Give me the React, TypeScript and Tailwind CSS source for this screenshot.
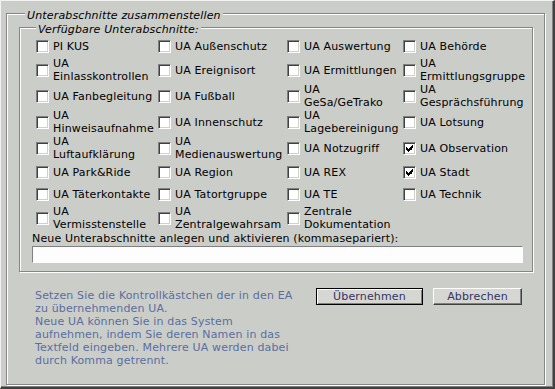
import type { ReactNode } from 'react'

type Item = { lines: string[]; checked?: boolean }

const rows: (Item | null)[][] = [
  [{ lines: ['PI KUS'] }, { lines: ['UA Außenschutz'] }, { lines: ['UA Auswertung'] }, { lines: ['UA Behörde'] }],
  [
    { lines: ['UA', 'Einlasskontrollen'] },
    { lines: ['UA Ereignisort'] },
    { lines: ['UA Ermittlungen'] },
    { lines: ['UA', 'Ermittlungsgruppe'] },
  ],
  [
    { lines: ['UA Fanbegleitung'] },
    { lines: ['UA Fußball'] },
    { lines: ['UA', 'GeSa/GeTrako'] },
    { lines: ['UA', 'Gesprächsführung'] },
  ],
  [
    { lines: ['UA', 'Hinweisaufnahme'] },
    { lines: ['UA Innenschutz'] },
    { lines: ['UA', 'Lagebereinigung'] },
    { lines: ['UA Lotsung'] },
  ],
  [
    { lines: ['UA', 'Luftaufklärung'] },
    { lines: ['UA', 'Medienauswertung'] },
    { lines: ['UA Notzugriff'] },
    { lines: ['UA Observation'], checked: true },
  ],
  [{ lines: ['UA Park&Ride'] }, { lines: ['UA Region'] }, { lines: ['UA REX'] }, { lines: ['UA Stadt'], checked: true }],
  [{ lines: ['UA Täterkontakte'] }, { lines: ['UA Tatortgruppe'] }, { lines: ['UA TE'] }, { lines: ['UA Technik'] }],
  [
    { lines: ['UA', 'Vermisstenstelle'] },
    { lines: ['UA', 'Zentralgewahrsam'] },
    { lines: ['Zentrale', 'Dokumentation'] },
    null,
  ],
]

function CheckBox({ checked }: { checked?: boolean }) {
  return (
    <span className="relative ml-[4px] inline-block h-[13px] w-[13px] shrink-0 border border-t-[#808080] border-l-[#808080] border-b-white border-r-white bg-white shadow-[inset_1px_1px_0_#404040,inset_-1px_-1px_0_#d4d0c8]">
      {checked ? (
        <svg
          className="absolute left-[2px] top-[2px]"
          width="7"
          height="7"
          viewBox="0 0 7 7"
          shapeRendering="crispEdges"
        >
          <path
            fill="#000"
            d="M6 0h1v3H6zM5 1h1v4H5zM4 2h1v3H4zM0 2h1v3H0zM1 3h1v3H1zM2 4h1v3H2zM3 3h1v3H3z"
          />
        </svg>
      ) : null}
    </span>
  )
}

function GroupBox({
  title,
  legendLeft,
  className,
  children,
}: {
  title: string
  legendLeft: string
  className: string
  children: ReactNode
}) {
  return (
    <div
      className={`relative border border-[#868686] shadow-[inset_1px_1px_0_#fff,1px_1px_0_#fff] ${className}`}
    >
      <span
        className={`absolute -top-[5px] ${legendLeft} bg-[#cbcdc9] px-[2px] italic leading-[13px] text-black`}
      >
        {title}
      </span>
      {children}
    </div>
  )
}

export default function App() {
  return (
    <div className="flex h-[389px] w-[555px] flex-col border-t border-l border-r-2 border-b-2 border-t-[#f2f2f0] border-l-[#f2f2f0] border-r-[#404040] border-b-[#404040] bg-[#cbcdc9] pt-[12px] pl-[5px] pr-[8px] pb-[2px] font-['DejaVu_Sans',Verdana,sans-serif] text-[11px] tracking-[0.15px] shadow-[inset_-1px_-1px_0_#808080]">
      <GroupBox title="Unterabschnitte zusammenstellen" legendLeft="left-[18px]" className="flex-1">
        <GroupBox
          title="Verfügbare Unterabschnitte:"
          legendLeft="left-[16px]"
          className="ml-[12px] mt-[13px] w-[514px] pl-[12px] pr-[9px] pt-[7px] pb-[8px]"
        >
          <div className="grid grid-cols-[122px_129px_116px_1fr] text-black">
            {rows.flatMap((row, r) =>
              row.map((item, c) =>
                item ? (
                  <label key={`${r}-${c}`} className="flex min-h-[22px] items-center">
                    <CheckBox checked={item.checked} />
                    <span className="ml-[4px] whitespace-nowrap leading-[13px]">
                      {item.lines.map((line) => (
                        <span key={line} className="block">
                          {line}
                        </span>
                      ))}
                    </span>
                  </label>
                ) : (
                  <div key={`${r}-${c}`} />
                ),
              ),
            )}
          </div>
          <div className="mt-[1px] leading-[13px] text-black">
            Neue Unterabschnitte anlegen und aktivieren (kommasepariert):
          </div>
          <div className="mt-[1px] h-[17px] w-[491px] border border-t-[#808080] border-l-[#808080] border-b-white border-r-white bg-[#fdfdfd]" />
        </GroupBox>

        <div className="ml-[28px] mt-[16px] flex items-start">
          <div className="w-[281px] whitespace-nowrap pt-[1px] leading-[13px] text-[#5a6ea0]">
            Setzen Sie die Kontrollkästchen der in den EA
            <br />
            zu übernehmenden UA.
            <br />
            Neue UA können Sie in das System
            <br />
            aufnehmen, indem Sie deren Namen in das
            <br />
            Textfeld eingeben. Mehrere UA werden dabei
            <br />
            durch Komma getrennt.
          </div>
          <button
            type="button"
            className="h-[17px] w-[107px] border border-black bg-[#d6d7d3] text-[11px] leading-[13px] text-[#333366] shadow-[inset_1px_1px_0_#fff,inset_-1px_-1px_0_#808080]"
          >
            Übernehmen
          </button>
          <button
            type="button"
            className="ml-[10px] h-[17px] w-[89px] border border-t-white border-l-white border-r-[#404040] border-b-[#404040] bg-[#d6d7d3] text-[11px] leading-[13px] text-[#333366] shadow-[inset_-1px_-1px_0_#808080]"
          >
            Abbrechen
          </button>
        </div>
      </GroupBox>
    </div>
  )
}
